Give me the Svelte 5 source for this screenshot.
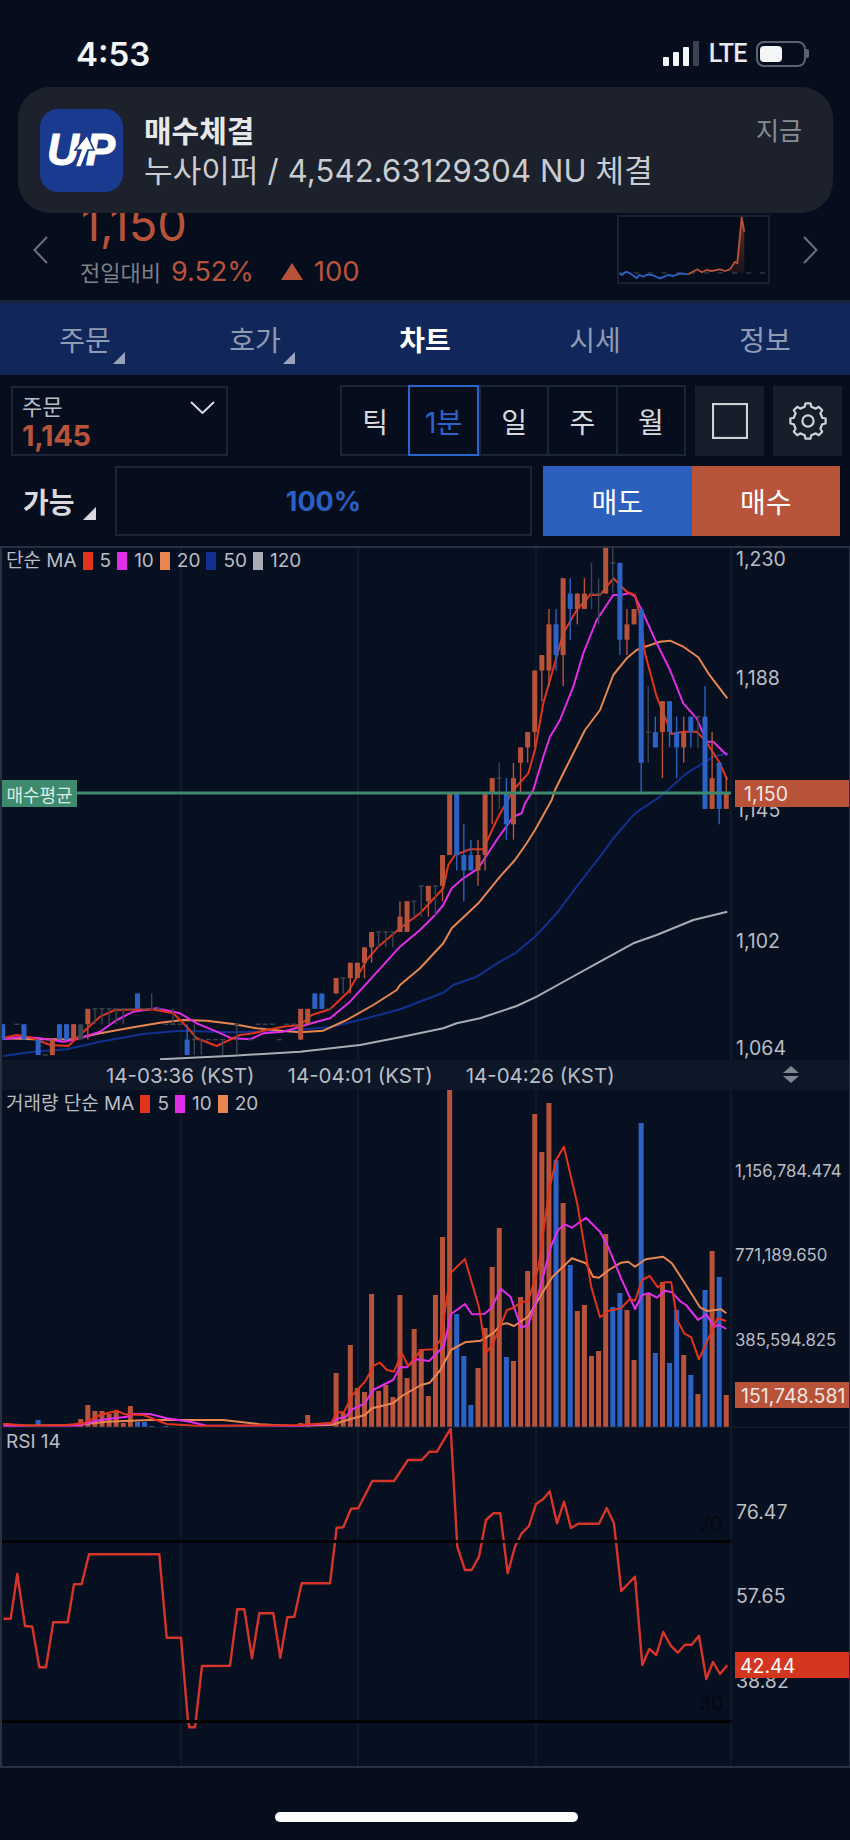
<script>
  const ORANGE = '#b8533a';
  const BLUE = '#2c62c4';
  const GRAY = '#3b4452';

  const tabs = [
    { label: '주문', corner: true },
    { label: '호가', corner: true },
    { label: '차트', active: true },
    { label: '시세' },
    { label: '정보' },
  ];
  const periods = ['틱', '1분', '일', '주', '월'];

  const barX = (i) => 2.7 + 7.094 * i;
  const levelY = (k) => 1055 - 15.38 * k;

  // [index, colour, body top, body bottom, wick top, wick bottom] in price ticks
  const candles = [
    [0,'b',2,1],[2,'g',2,2],[3,'b',2,1],[5,'b',1,0],[6,'g',0,0],[7,'o',1,0],[8,'b',2,1],[9,'b',2,1],
    [10,'o',2,1],[11,'g',2,1,2,1],[12,'o',3,2,3,1],[13,'g',3,3,3,2],[14,'g',3,3,3,2],[15,'g',3,3,3,2],
    [16,'g',3,3,3,2],[17,'g',3,3,3,2],[18,'g',3,3],[19,'b',4,3],[20,'g',3,3],[21,'g',3,3,4,3],[22,'g',3,3],
    [23,'g',2,2],[24,'g',2,2,3,2],[25,'g',2,2],[26,'b',1,0,2,0],[27,'g',1,1,2,0],[28,'g',1,1,1,0],
    [29,'g',1,1],[30,'g',1,1],[31,'g',1,1,1,0],[33,'g',2,2,2,0],[35,'g',1,1],[36,'g',2,2],[37,'g',2,2],
    [38,'g',2,2],[39,'g',1,1],[40,'g',2,2],[41,'g',2,2],[42,'o',3,1],[43,'o',3,2],[44,'b',4,3],[45,'b',4,3],
    [46,'g',3,3],[47,'o',5,4],[48,'g',5,5,5,4],[49,'o',6,5,6,4],[50,'o',6,5],[51,'o',7,6,7,5],[52,'o',8,7,8,6],
    [53,'g',8,8,8,7],[54,'g',8,8,8,7],[55,'g',8,8,8,7],[56,'o',9,8,10,8],[57,'o',10,8],[58,'g',10,10,10,9],
    [59,'g',11,11,11,9],[60,'o',11,10,11,9],[61,'g',11,11,11,9],[62,'o',13,11,13,10],[63,'o',17,13],
    [64,'b',17,13,17,12],[65,'b',13,12,15,10],[66,'b',13,12,14,12],[67,'o',13,12,14,11],[68,'o',17,13,17,12],
    [69,'o',18,17,18,15],[70,'g',18,18,19,16],[71,'b',17,15,18,14],[72,'o',18,15,19,14],[73,'o',20,19,20,17],
    [74,'o',21,20,21,19],[75,'o',25,21,25,20],[76,'o',26,25,26,23],[77,'o',28,25,29,24],[78,'b',28,26,29,25],
    [79,'o',31,26,31,24],[80,'b',30,29,31,27],[81,'o',30,29,30,28],[82,'o',30,29,31,29],[83,'g',30,30,32,29],
    [84,'g',30,30,31,28],[85,'o',33,30],[86,'g',32,32,33,30],[87,'b',32,27,32,26],[88,'o',28,27,29,26],
    [89,'o',29,28],[90,'b',29,19,29,17],[91,'g',21,21,24,19],[92,'b',21,20,22,20],[93,'o',23,21,23,18],
    [94,'b',23,21,23,20],[95,'b',21,20,22,18],[96,'o',21,20,22,19],[97,'b',22,21,22,20],[98,'g',22,22,22,20],
    [99,'b',22,16,24,16],[100,'o',18,16,21,16],[101,'b',19,16,19,15],[102,'o',17,16,18,16],
  ].map(([i, c, top, bot, wTop, wBot]) => ({
    x: barX(i),
    color: c === 'o' ? ORANGE : c === 'b' ? BLUE : GRAY,
    top: levelY(top),
    bot: levelY(bot),
    wTop: levelY(wTop ?? top),
    wBot: levelY(wBot ?? bot),
    doji: top === bot,
  }));

  const seg = (x0, y0, flat, sx = 3, sy = 3) => {
    const out = [];
    for (let i = 0; i < flat.length; i += 2) out.push(`${(x0 + flat[i] / sx).toFixed(1)},${(y0 + flat[i + 1] / sy).toFixed(1)}`);
    return out;
  };
  const line = (...parts) => parts.flat().join(' ');

  const priceLines = [
    { color: '#a9adb3', points: line(seg(0, 800, [480,778,700,767,900,755,1080,735,1200,712]),
      seg(400, 800, [130,685,170,670,240,655,350,618,410,590,500,540,600,485,700,430,770,405,880,360,982,335])) },
    { color: '#12308f', points: line(seg(0, 800, [10,768,100,755,200,748,300,725,430,702,540,692,700,697,850,692,990,682,1100,655,1200,628]),
      seg(400, 800, [130,578,160,555,230,530,300,485,345,460,405,410,470,340,530,260,600,170,640,115,705,40,780,-10,860,-80,940,-130,982,-140])) },
    { color: '#e98650', points: line(seg(0, 800, [8,715,100,718,220,718,300,700,400,682,480,668,550,660,620,662,700,672,770,685,850,693,900,697,970,692,1040,660,1120,615,1190,570]),
      seg(400, 800, [0,555,60,505,130,430,155,385,235,310,300,230,345,180,380,130,405,90,455,0]),
      seg(400, 540, [465,750,490,700,520,640,555,570,600,510,640,405,680,355,710,330,735,320,780,305,810,302,850,320,895,352,925,400,982,475])) },
    { color: '#e32de6', points: line(seg(0, 800, [8,718,70,710,120,715,190,725,230,718,300,695,350,660,400,635,470,625,540,640,590,670,650,695,695,715,750,718,790,700,850,695,900,680,950,665,990,655,1050,605,1100,550,1200,440]),
      seg(400, 800, [60,390,105,345,130,315,155,265,190,235,235,205,290,120,340,50,365,40]),
      seg(400, 540, [375,790,400,750,430,650,450,590,480,540,520,440,550,340,590,240,640,165,660,165,690,160,705,170,730,220,770,310,810,390,850,490,890,535,920,605,940,605,970,635,982,645])) },
    { color: '#e2341d', points: line(seg(0, 800, [8,715,50,705,90,712,150,735,205,738,240,705,300,650,345,630,455,628,520,640,560,680,590,715,650,738,720,705,760,700,800,690,850,680,900,675,935,645,990,628,1045,575,1100,480,1135,440,1200,385,1260,340]),
      seg(400, 800, [130,265,145,195,165,165,210,148,250,148,290,60]),
      seg(400, 540, [340,750,385,700,405,630,430,490,450,420,490,280,530,210,570,165,600,165,640,115,680,155,705,165,720,230,735,340,770,470,800,545,815,582,850,575,890,575,915,600,960,670,982,720])) },
  ];

  const priceAxis = [['1,230', 559], ['1,188', 678], ['1,145', 810], ['1,102', 941], ['1,064', 1048]];

  // [index, top y]
  const orangeBars = [[11,1419],[12,1405],[13,1411],[14,1411],[15,1414],[16,1412],[17,1423],[18,1406],[42,1423],[43,1415],[47,1373],[48,1413],[49,1345],[50,1388],[51,1392],[52,1294],[53,1391],[54,1385],[55,1397],[56,1295],[57,1378],[58,1329],[59,1349],[60,1396],[61,1295],[62,1237],[63,1090],[67,1368],[68,1328],[69,1267],[70,1228],[72,1361],[73,1297],[74,1271],[75,1114],[76,1152],[77,1103],[79,1203],[81,1311],[82,1305],[83,1356],[84,1351],[85,1234],[88,1310],[89,1360],[91,1293],[93,1282],[96,1355],[98,1394],[100,1251],[102,1395]];
  const blueBars = [[5,1420],[19,1422],[20,1422],[21,1426],[23,1426],[64,1314],[65,1356],[66,1405],[71,1357],[78,1160],[80,1265],[86,1307],[87,1293],[90,1123],[92,1353],[94,1363],[95,1310],[97,1375],[99,1290],[101,1277]];

  const volLines = [
    { color: '#e98650', points: line(seg(0, 1090, [10,1002,60,1007,230,1005,320,995,450,990,670,990,780,1003,880,1008]),
      seg(300, 1080, [90,1035,135,1020,185,1005,205,985,265,970,290,948,345,915,370,908,400,870,430,810,470,787,515,782,550,760,575,733,590,730,610,738,650,710,690,640,720,590,775,535,815,550,835,590,852,593,880,570,915,548,935,545,955,560,985,538,1035,530,1060,550,1100,615,1140,682,1160,693,1200,688,1215,700], 2.85)) },
    { color: '#e32de6', points: line(seg(0, 1090, [10,1008,230,1007,300,990,380,980,400,972,450,972,500,985,570,995,620,1007,900,1008]),
      seg(300, 1080, [90,1030,110,1015,130,1012,145,990,185,970,208,930,265,900,285,862,305,862,330,838,368,843,410,798,430,703,470,672,490,703,525,702,545,685,572,627,600,650,630,743,650,735,680,640,715,500,735,450,755,433,775,443,815,413,855,455,880,505,915,595,955,687,975,645,995,640,1017,653,1040,632,1060,637,1085,665,1100,675,1135,720,1158,703,1180,740,1195,735,1215,747], 2.85)) },
    { color: '#e2341d', points: line(seg(0, 1090, [10,1002,100,1007,200,1005,250,1000,300,975,350,962,375,973,430,975,500,1002,600,1008,900,1005]),
      seg(300, 1080, [90,1028,105,997,125,997,150,945,185,905,210,857,228,848,248,870,268,875,290,820,308,858,345,810,380,808,400,780,430,578,470,537,510,680,530,820,550,790,590,690,610,683,630,665,650,665,680,560,710,330,730,240,752,200,790,370,830,620,855,712,880,692,915,685,940,657,955,662,975,600,997,588,1020,622,1040,607,1058,607,1075,720,1095,760,1115,772,1137,838,1190,715,1215,723], 2.85)) },
  ];
  const volAxis = [['1,156,784.474', 1171], ['771,189.650', 1255], ['385,594.825', 1340]];

  const rsiLine = line(
    seg(0, 1420, [10,596,32,596,52,462,75,618,97,620,118,742,138,742,160,607,203,607,222,493,245,492,267,403,478,403,500,653,543,653,563,895,568,922,585,922,606,738,690,737,712,568,733,568,756,715,778,580,820,580,841,713,862,592,883,590,905,490,990,490,1010,323,1030,322,1053,266,1075,265,1117,183,1182,183,1224,120,1265,120]),
    seg(425, 1420, [0,110,13,95,36,95,77,25,97,380,120,450,140,450,162,410,183,300,205,280,226,280,248,460,270,380,290,340,312,318,333,252,355,237,374,214,396,310,417,245,438,324,460,311,522,311,545,264,567,310,589,513,630,470,652,735,673,687,694,705,715,636,737,677,758,698,780,674,800,674,822,647,844,777,864,726,885,762,907,736])
  );
  const rsiAxis = [['76.47', 1512], ['57.65', 1596], ['38.82', 1681]];

  const gridX = [181, 358, 536, 731];

  const miniBlue = line(seg(0, 0, [28,190,36,195,48,185,60,190,80,205,88,195,100,200,110,194,125,195,150,205,175,195,190,198,210,190,235,193]));
  const miniRed = line(seg(0, 0, [235,193,262,178,275,187,290,180,305,183,330,178,345,183,360,178,375,155,382,160,395,22,403,65]));

  // eight tooth gear outline, centred on 0,0
  const gear = (() => {
    const out = [];
    const at = (r, deg) => `${(r * Math.cos((deg * Math.PI) / 180)).toFixed(2)},${(r * Math.sin((deg * Math.PI) / 180)).toFixed(2)}`;
    for (let t = 0; t < 8; t++) {
      const a = -90 + t * 45;
      out.push(at(14.6, a - 13), at(17.8, a - 8), at(17.8, a + 8), at(14.6, a + 13));
    }
    return out.join(' ');
  })();
</script>

<div class="screen">
  <div class="status">
    <span class="time">4:53</span>
    <div class="status-right">
      <div class="signal"><i class="b1"></i><i class="b2"></i><i class="b3"></i><i class="b4"></i></div>
      <span class="lte">LTE</span>
      <div class="battery"><i></i></div>
    </div>
  </div>

  <div class="notice">
    <div class="app-icon">
      <svg width="83" height="83" viewBox="0 0 83 83">
        <text class="logo-text" x="7" y="56" textLength="68">UP</text>
        <path d="M47 26 L35 41 L41 41 L35 58 L41 58 L48 41 L54 41 Z" fill="#fff" stroke="#1a3a8f" stroke-width="1.6" />
      </svg>
    </div>
    <div class="notice-text">
      <div class="notice-title">매수체결</div>
      <div class="notice-sub">누사이퍼 / 4,542.63129304 NU 체결</div>
    </div>
    <span class="notice-time">지금</span>
  </div>

  <div class="ticker">
    <svg class="chev" width="15" height="28" viewBox="0 0 15 28"><path d="M14 1 L1.5 14 L14 27" /></svg>
    <div class="quote">
      <div class="price">1,150</div>
      <div class="change">
        <span class="change-label">전일대비</span>
        <span class="change-pct">9.52%</span>
        <span class="change-tri"></span>
        <span class="change-val">100</span>
      </div>
    </div>
    <svg class="mini" width="153" height="69" viewBox="617 215 153 69">
      <defs>
        <linearGradient id="miniFill" x1="0" y1="0" x2="0" y2="1">
          <stop offset="0" stop-color="#b8533a" stop-opacity="0.55" />
          <stop offset="1" stop-color="#b8533a" stop-opacity="0.1" />
        </linearGradient>
      </defs>
      <rect x="618" y="216" width="151" height="67" fill="#050c1a" stroke="#182130" stroke-width="2" />
      <line x1="620" y1="273" x2="766" y2="273" stroke="#232c3b" stroke-width="2" stroke-dasharray="5 9" />
      <g transform="translate(610 210)">
        <polygon points="360,188 375,155 382,160 395,22 403,65 403,188" transform="scale(0.3333)" fill="url(#miniFill)" />
      </g>
      <polyline points={miniBlue} transform="translate(610 210)" class="mini-line" stroke={BLUE} />
      <polyline points={miniRed} transform="translate(610 210)" class="mini-line" stroke={ORANGE} />
    </svg>
    <svg class="chev" width="15" height="28" viewBox="0 0 15 28"><path d="M1 1 L13.5 14 L1 27" /></svg>
  </div>

  <nav class="tabs">
    {#each tabs as tab}
      <div class="tab" class:active={tab.active}>
        {tab.label}
        {#if tab.corner}<i class="corner"></i>{/if}
      </div>
    {/each}
  </nav>

  <div class="tools">
    <div class="order">
      <div>
        <div class="order-label">주문</div>
        <div class="order-price">1,145</div>
      </div>
      <svg width="25" height="13" viewBox="0 0 25 13"><path d="M1 1 L12.5 12 L24 1" fill="none" stroke="#d8dadd" stroke-width="2" /></svg>
    </div>
    <div class="tool-right">
      <div class="periods">
        {#each periods as p}
          <div class="period" class:on={p === '1분'}>{p}</div>
        {/each}
      </div>
      <div class="tool-btn">
        <svg width="36" height="36" viewBox="0 0 36 36"><rect x="1" y="1" width="34" height="34" fill="none" stroke="#cfd2d6" stroke-width="2.2" /></svg>
      </div>
      <div class="tool-btn">
        <svg width="40" height="40" viewBox="-20 -20 40 40">
          <polygon points={gear} fill="none" stroke="#cfd2d6" stroke-width="2.2" stroke-linejoin="round" />
          <circle r="5.6" fill="none" stroke="#cfd2d6" stroke-width="2.2" />
        </svg>
      </div>
    </div>
  </div>

  <div class="trade">
    <div class="avail">가능<i class="corner light"></i></div>
    <div class="ratio">100%</div>
    <div class="trade-btn sell">매도</div>
    <div class="trade-btn buy">매수</div>
  </div>

  <div class="charts">
    <div class="panel">
      <svg width="850" height="514" viewBox="0 546 850 514">
        {#each gridX as x}<line x1={x} x2={x} y1="546" y2="1060" class="grid" />{/each}
        {#each priceLines as l}<polyline points={l.points} class="ma" stroke={l.color} />{/each}
        {#each candles as c}
          {#if c.wTop !== c.wBot}
            <line x1={c.x} x2={c.x} y1={c.wTop} y2={c.wBot} stroke={c.color} stroke-width="1.4" />
          {/if}
          {#if c.doji}
            <line x1={c.x - 2.5} x2={c.x + 2.5} y1={c.top} y2={c.top} stroke={c.color} stroke-width="1.4" />
          {:else}
            <rect x={c.x - 2.5} y={c.top} width="5" height={c.bot - c.top} fill={c.color} />
          {/if}
        {/each}
        <rect x="0" y="791.5" width="731" height="3" fill="#3e8a6f" />
        {#each priceAxis as [label, y]}<text x="736" {y} class="axis">{label}</text>{/each}
        <rect x="735" y="780" width="114" height="27" fill={ORANGE} />
        <text x="744" y="794" class="tag">1,150</text>
      </svg>
      <div class="legend">
        <span>단순 MA</span>
        <i style="background:#e2341d"></i><span>5</span>
        <i style="background:#e32de6"></i><span>10</span>
        <i style="background:#e98650"></i><span>20</span>
        <i style="background:#12308f"></i><span>50</span>
        <i style="background:#a9adb3"></i><span>120</span>
      </div>
      <div class="avg-label">매수평균</div>
    </div>

    <div class="date-bar">
      <span>14-03:36 (KST)</span>
      <span>14-04:01 (KST)</span>
      <span>14-04:26 (KST)</span>
      <svg width="18" height="18" viewBox="0 0 18 18"><path d="M9 0 L17 7 H1 Z M1 10 H17 L9 17 Z" fill="#7f868f" /></svg>
    </div>

    <div class="panel">
      <svg width="850" height="338" viewBox="0 1090 850 338">
        {#each gridX as x}<line x1={x} x2={x} y1="1090" y2="1428" class="grid" />{/each}
        {#each orangeBars as [i, top]}<rect x={barX(i) - 2.5} y={top} width="5" height={1427 - top} fill={ORANGE} />{/each}
        {#each blueBars as [i, top]}<rect x={barX(i) - 2.5} y={top} width="5" height={1427 - top} fill={BLUE} />{/each}
        {#each volLines as l}<polyline points={l.points} class="ma" stroke={l.color} />{/each}
        <line x1="0" x2="850" y1="1427.5" y2="1427.5" class="grid" />
        {#each volAxis as [label, y]}<text x="735" {y} class="axis small">{label}</text>{/each}
        <rect x="735" y="1382" width="114" height="26" fill={ORANGE} />
        <text x="741" y="1396" class="tag vol">151,748.581</text>
      </svg>
      <div class="legend vol-legend">
        <span>거래량 단순 MA</span>
        <i style="background:#e2341d"></i><span>5</span>
        <i style="background:#e32de6"></i><span>10</span>
        <i style="background:#e98650"></i><span>20</span>
      </div>
    </div>

    <div class="panel">
      <svg width="850" height="340" viewBox="0 1428 850 340">
        {#each gridX as x}<line x1={x} x2={x} y1="1428" y2="1768" class="grid" />{/each}
        <polyline points={rsiLine} class="ma rsi" stroke="#d7352a" />
        <rect x="2" y="1540" width="729" height="3" fill="#000" />
        <rect x="2" y="1720" width="729" height="3" fill="#000" />
        <text x="699" y="1524" class="axis dark">70</text>
        <text x="699" y="1703" class="axis dark">30</text>
        {#each rsiAxis as [label, y]}<text x="736" {y} class="axis">{label}</text>{/each}
        <rect x="735" y="1652" width="114" height="26" fill="#d4351f" />
        <text x="740" y="1666" class="tag rsi-tag">42.44</text>
      </svg>
      <div class="legend rsi-legend"><span>RSI 14</span></div>
    </div>
  </div>

  <div class="home-bar"></div>
</div>

<style>
  :global(body) { margin:0; background:#060e1e; }
  .screen { position:relative; width:850px; height:1840px; overflow:hidden; background:#060e1e; color:#d8dadd; font-family:Inter, "Noto Sans CJK KR", sans-serif; }

  .status { display:flex; justify-content:space-between; align-items:center; height:87px; padding:20px 44px 0 76px; box-sizing:border-box; }
  .time { font-size:33px; font-weight:600; color:#f4f5f6; }
  .status-right { display:flex; align-items:center; }
  .signal { display:flex; align-items:flex-end; gap:4px; height:25px; }
  .signal i { width:6px; background:#f4f5f6; border-radius:1px; }
  .signal .b1 { height:9px; } .signal .b2 { height:14px; } .signal .b3 { height:19px; } .signal .b4 { height:25px; background:#3a4150; }
  .lte { margin-left:10px; font:500 25px Roboto, sans-serif; color:#e8e9ea; letter-spacing:-.5px; }
  .battery { position:relative; margin-left:9px; width:50px; height:26px; border:2px solid #5b6270; border-radius:8px; box-sizing:border-box; padding:3px 2px; }
  .battery i { display:block; width:22px; height:100%; background:#f4f5f6; border-radius:4px; }
  .battery::after { content:""; position:absolute; right:-5px; top:6px; width:3px; height:9px; background:#5b6270; border-radius:0 2px 2px 0; }

  .notice { position:absolute; z-index:2; left:18px; top:87px; width:815px; height:126px; box-sizing:border-box; padding:22px 31px 0 22px; display:flex; border-radius:32px; background:#1c212b; }
  .app-icon { width:83px; height:83px; border-radius:18px; background:#1a3a8f; flex:none; }
  .logo-text { font:italic 700 44px "Liberation Sans", sans-serif; fill:#fff; stroke:#fff; stroke-width:1; }
  .notice-text { margin:3px 0 0 21px; flex:1; font-size:31px; line-height:39px; }
  .notice-title { font-weight:700; font-size:30px; color:#e6e7e9; }
  .notice-sub { color:#c9ccd1; letter-spacing:.15px; }
  .notice-time { font-size:25px; line-height:44px; color:#888c93; }

  .ticker { display:flex; height:213px; box-sizing:border-box; padding:121px 32px 0 33px; }
  .chev { margin-top:28px; flex:none; }
  .chev path { fill:none; stroke:#69717e; stroke-width:2; }
  .quote { margin-left:32px; }
  .price { font-size:47px; line-height:47px; color:#b8533a; margin:-8px 0 0 1px; }
  .change { display:flex; align-items:center; margin-top:9px; height:30px; white-space:nowrap; }
  .change-label { font-size:22px; color:#7b8089; }
  .change-pct { margin-left:10px; font-size:27px; color:#b8533a; }
  .change-tri { margin-left:27px; border-left:11px solid transparent; border-right:11px solid transparent; border-bottom:17px solid #b8533a; }
  .change-val { margin-left:11px; font-size:27.5px; color:#b8533a; }
  .mini { margin:7px 33px 0 auto; flex:none; }
  .mini-line { fill:none; stroke-width:1.8; stroke-linejoin:round; }

  .tabs { display:grid; grid-template-columns:repeat(5, 170px); height:75px; box-sizing:border-box; border-top:3px solid #182334; background:#112659; }
  .tab { position:relative; display:flex; align-items:center; justify-content:center; font-size:28px; color:#8f9ab3; }
  .tab.active { color:#fff; font-weight:700; }
  .corner { position:absolute; width:0; height:0; border-left:12px solid transparent; border-bottom:12px solid #98a3bb; }
  .tab .corner { left:113px; bottom:11px; }

  .tools { display:flex; justify-content:space-between; padding:11px 8px 0 11px; height:91px; box-sizing:border-box; }
  .order { display:flex; justify-content:space-between; width:217px; height:70px; box-sizing:border-box; border:2px solid #1c2535; padding:6px 11px 0 9px; }
  .order-label { font-size:22px; line-height:27px; color:#b9bdc4; }
  .order-price { font-size:29px; line-height:29px; font-weight:700; color:#b8533a; letter-spacing:-.3px; }
  .order svg { margin-top:7px; }
  .tool-right { display:flex; gap:9px; }
  .periods { display:flex; width:346px; height:71px; box-sizing:border-box; border:2px solid #1c2535; margin-top:-1px; }
  .period { position:relative; flex:1; display:flex; align-items:center; justify-content:center; font-size:28px; color:#d8dadd; border-left:2px solid #1c2535; }
  .period:first-child { border-left:none; }
  .period.on { color:#2a63c9; border:2px solid #2a63c9; margin:-2px 0; }
  .tool-btn { display:flex; align-items:center; justify-content:center; width:69px; height:70px; background:#161d2b; }

  .trade { display:flex; height:80px; }
  .avail { position:relative; width:115px; height:70px; box-sizing:border-box; padding-left:23px; display:flex; align-items:center; font-size:28px; font-weight:700; color:#d8dadd; }
  .corner.light { left:83px; bottom:16px; border-left-width:13px; border-bottom-width:13px; border-bottom-color:#d8dadd; }
  .ratio { width:417px; height:70px; box-sizing:border-box; border:2px solid #1c2535; display:flex; align-items:center; justify-content:center; font-size:27px; font-weight:700; color:#2a5fc4; }
  .trade-btn { display:flex; align-items:center; justify-content:center; width:148.5px; height:70px; font-size:28px; color:#fff; }
  .sell { margin-left:11px; background:#2d5fbf; }
  .buy { background:#b8543a; }

  .charts { position:relative; height:1222px; background:#071020; }
  .charts::after { content:""; position:absolute; inset:0; box-sizing:border-box; border:2px solid #283142; border-right-width:1px; pointer-events:none; }
  .panel { position:relative; }
  .panel svg { display:block; }
  .grid { stroke:#141d2c; stroke-width:1.5; }
  .ma { fill:none; stroke-width:2; stroke-linejoin:round; }
  .rsi { stroke-width:2.4; }
  .axis { font-size:19.5px; fill:#b9bdc4; dominant-baseline:central; }
  .axis.small { font-size:16.8px; }
  .axis.dark { fill:#05080f; }
  .tag { font-size:19.5px; fill:#f3e6e1; dominant-baseline:central; }
  .tag.vol { font-size:19.5px; }
  .tag.rsi-tag { fill:#fff; }

  .legend { position:absolute; left:6px; top:5px; display:flex; align-items:center; font-size:19px; line-height:20px; color:#b9bdc4; white-space:nowrap; }
  .legend i { width:10px; height:18px; margin:0 7px 0 6px; }
  .vol-legend { top:4px; }
  .rsi-legend { top:4px; }
  .avg-label { position:absolute; left:2px; top:234px; width:75px; height:27px; display:flex; align-items:center; justify-content:center; background:#3e8a6f; font-size:18px; color:#dcebe4; white-space:nowrap; }

  .date-bar { display:flex; align-items:center; gap:33px; height:30px; box-sizing:border-box; padding-left:106px; background:#0e1727; font-size:20.5px; color:#b9bdc4; white-space:nowrap; }
  .date-bar svg { margin-left:auto; margin-right:50px; }

  .home-bar { position:absolute; left:275px; top:1812px; width:303px; height:10px; border-radius:5px; background:#fff; }
</style>
